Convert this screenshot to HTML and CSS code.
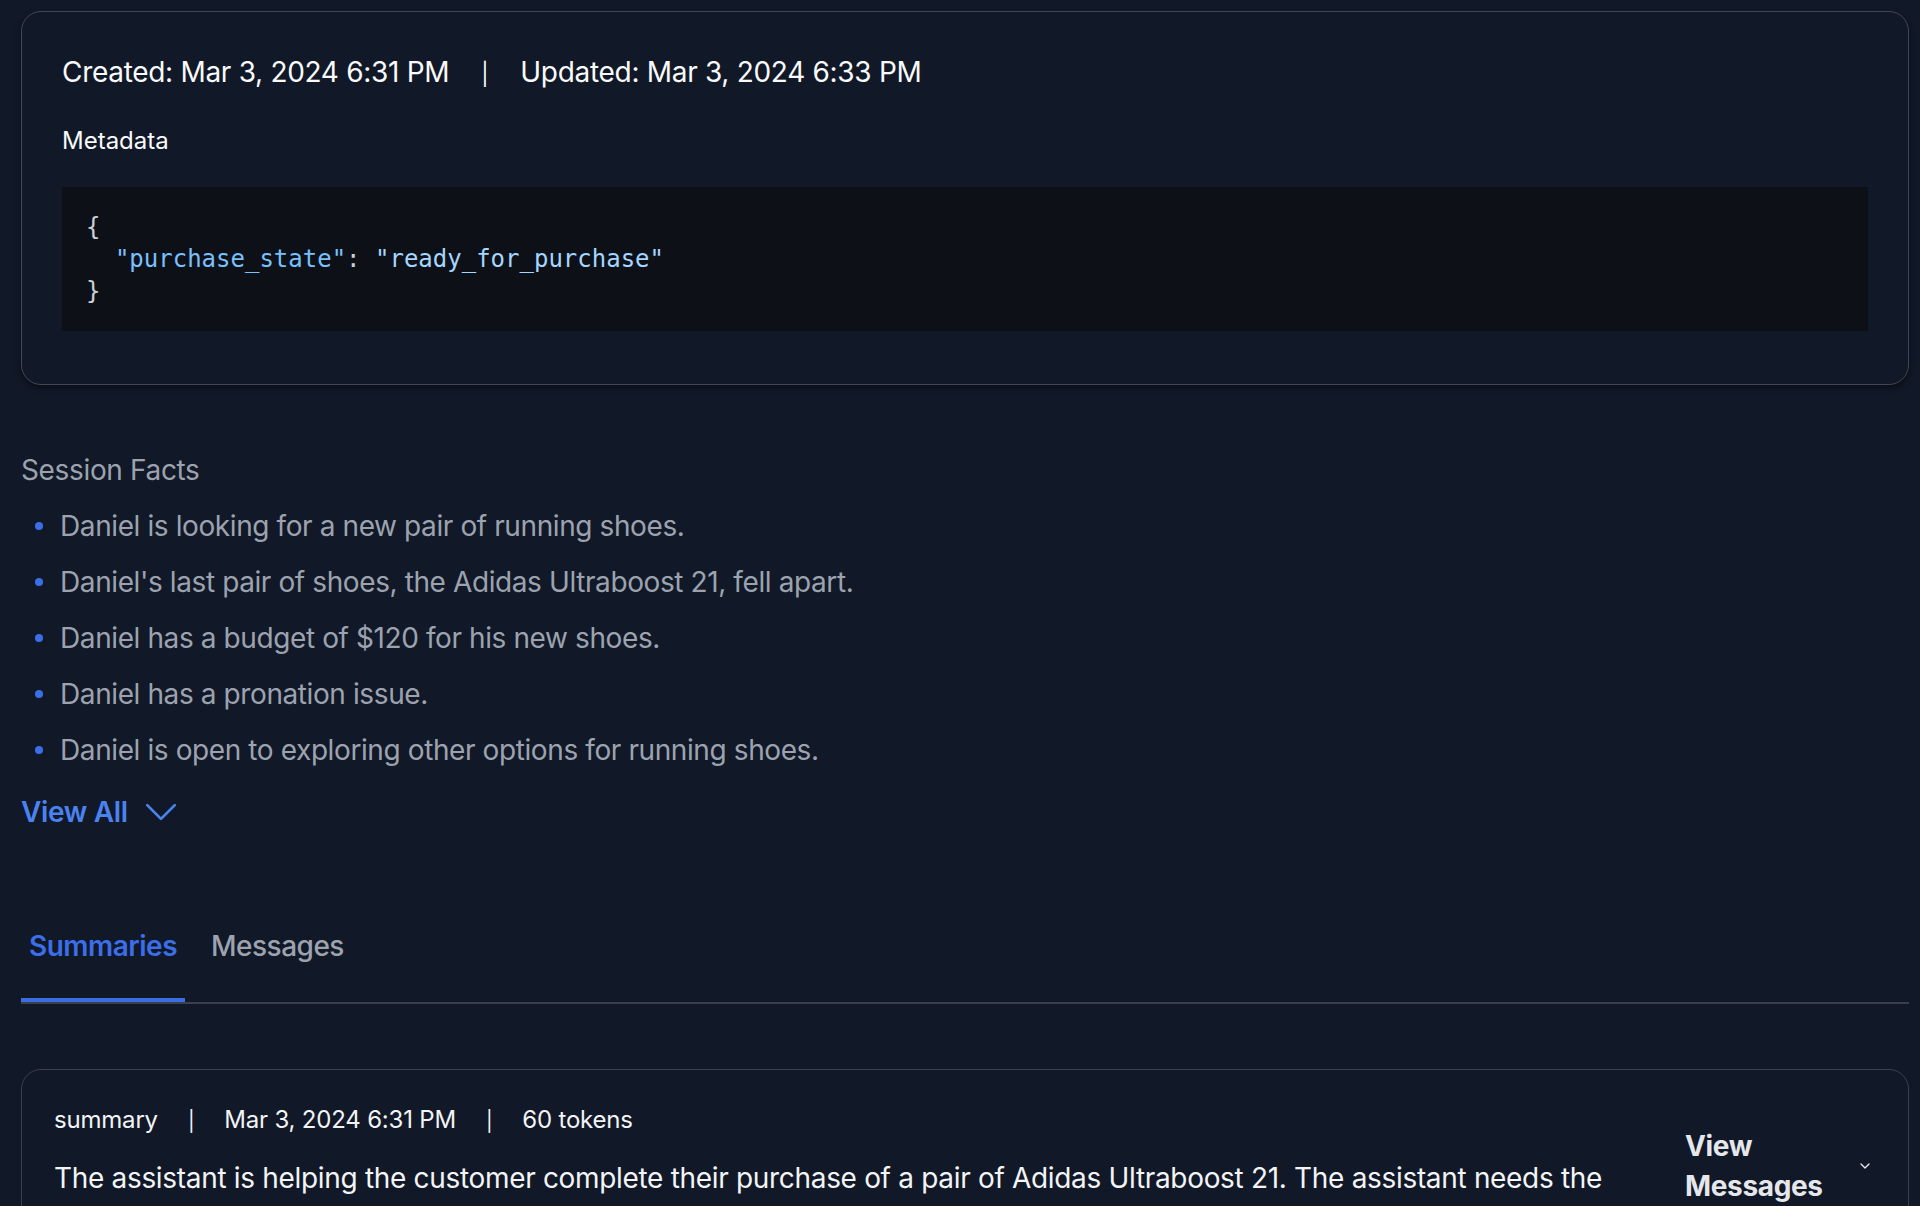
FILE: index.html
```html
<!DOCTYPE html>
<html lang="en">
<head>
<meta charset="utf-8">
<title>Session</title>
<link rel="stylesheet" href="styles.css">
</head>
<body>
<main class="page">
  <section class="card">
    <div class="timestamps">
      <span>Created: Mar 3, 2024 6:31 PM</span><span class="sep">|</span><span>Updated: Mar 3, 2024 6:33 PM</span>
    </div>
    <div class="meta-label">Metadata</div>
    <pre class="code"><span class="punc">{</span>
  <span class="key">"purchase_state"</span><span class="punc">: </span><span class="str">"ready_for_purchase"</span>
<span class="punc">}</span></pre>
  </section>

  <section class="facts-section">
    <h2 class="facts-title">Session Facts</h2>
    <ul class="facts">
      <li class="fact">Daniel is looking for a new pair of running shoes.</li>
      <li class="fact">Daniel's last pair of shoes, the Adidas Ultraboost 21, fell apart.</li>
      <li class="fact">Daniel has a budget of $120 for his new shoes.</li>
      <li class="fact">Daniel has a pronation issue.</li>
      <li class="fact">Daniel is open to exploring other options for running shoes.</li>
    </ul>
    <button class="view-all" type="button">
      <span>View All</span>
      <svg class="view-all-icon" viewBox="0 0 24 24" fill="none" stroke="currentColor" stroke-width="1.5" stroke-linecap="round" stroke-linejoin="round"><path d="M19.5 8.25l-7.5 7.5-7.5-7.5"/></svg>
    </button>
  </section>

  <nav class="tabs">
    <button class="tab tab-active" type="button">Summaries</button>
    <button class="tab" type="button">Messages</button>
  </nav>

  <section class="summary-card">
    <div class="summary-body">
      <div class="summary-meta">
        <span>summary</span><span class="meta-sep">|</span><span>Mar 3, 2024 6:31 PM</span><span class="meta-sep">|</span><span>60 tokens</span>
      </div>
      <p class="summary-text">The assistant is helping the customer complete their purchase of a pair of Adidas Ultraboost 21. The assistant needs the</p>
    </div>
    <button class="view-messages" type="button">
      <span class="vm-label">View Messages</span>
      <svg class="vm-icon" viewBox="0 0 24 24" fill="none" stroke="currentColor" stroke-width="2" stroke-linecap="round" stroke-linejoin="round"><path d="M6 9l6 6 6-6"/></svg>
    </button>
  </section>
</main>
</body>
</html>
```

FILE: styles.css
```css
* {
  box-sizing: border-box;
}

html,
body {
  margin: 0;
  background: #111827;
}

body {
  font-family: Inter, "Noto Sans", "Liberation Sans", sans-serif;
  color: #f3f4f6;
  overflow: hidden;
}

.page {
  padding: 11px 11px 0 21px;
}

.card {
  border: 1px solid #404757;
  border-radius: 20px;
  padding: 40px;
  background: #111827;
  box-shadow: 0 3px 6px rgba(0, 0, 0, 0.45);
}

.timestamps {
  font-size: 28px;
  line-height: 40px;
  font-weight: 400;
  letter-spacing: -0.3px;
  color: #f9fafb;
}

.sep {
  margin: 0 32px;
  font-size: 22px;
  line-height: 1;
}

.meta-label {
  margin-top: 33px;
  font-size: 24px;
  line-height: 32px;
  color: #f9fafb;
}

.code {
  margin: 30px 0 13px;
  padding: 24px 24px;
  background: #0d1117;
  font-family: "DejaVu Sans Mono", "Liberation Mono", monospace;
  font-size: 24px;
  line-height: 32px;
  color: #c9d1d9;
  white-space: pre;
}

.key {
  color: #79c0ff;
}

.str {
  color: #a5d6ff;
}

.punc {
  color: #c9d1d9;
}

.facts-section {
  margin-top: 65px;
}

.facts-title {
  margin: 0;
  font-size: 28px;
  line-height: 40px;
  font-weight: 400;
  letter-spacing: -0.35px;
  color: #9ca3af;
}

.facts {
  list-style: none;
  margin: 16px 0 0;
  padding: 0 0 0 14px;
  display: flex;
  flex-direction: column;
  gap: 16px;
}

.fact {
  display: flex;
  align-items: center;
  font-size: 28px;
  line-height: 40px;
  letter-spacing: -0.4px;
  color: #9ca3af;
}

.fact::before {
  content: "";
  flex: none;
  width: 8px;
  height: 8px;
  border-radius: 50%;
  background: #3b6ee8;
  margin-right: 17px;
}

.view-all {
  margin-top: 20px;
  display: inline-flex;
  align-items: center;
  gap: 11px;
  padding: 0;
  border: none;
  background: none;
  font-family: inherit;
  font-size: 28px;
  line-height: 40px;
  font-weight: 600;
  letter-spacing: -0.35px;
  color: #4a83f0;
}

.view-all-icon {
  width: 44px;
  height: 44px;
}

.tabs {
  margin-top: 68px;
  display: flex;
  gap: 18px;
  border-bottom: 2px solid #3a3f4e;
}

.tab {
  padding: 24px 8px 32px;
  border: none;
  border-bottom: 4px solid transparent;
  background: none;
  font-family: inherit;
  font-size: 28px;
  line-height: 40px;
  font-weight: 500;
  letter-spacing: -0.5px;
  color: #9ca3af;
}

.tab-active {
  border-bottom-color: #3b6ee0;
  color: #3b6ee8;
  font-weight: 600;
}

.summary-card {
  margin-top: 65px;
  border: 1px solid #3a3f4e;
  border-radius: 20px;
  padding: 34px 32px 32px;
  display: flex;
  align-items: flex-start;
  gap: 24px;
}

.summary-body {
  flex: 1;
  min-width: 0;
}

.summary-meta {
  font-size: 24px;
  line-height: 32px;
  letter-spacing: -0.2px;
  color: #f3f4f6;
}

.meta-sep {
  margin: 0 30px;
  font-size: 20px;
  line-height: 1;
}

.summary-text {
  margin: 18px 0 0;
  font-size: 28px;
  line-height: 48px;
  letter-spacing: -0.32px;
  color: #f3f4f6;
}

.view-messages {
  flex: none;
  width: 191px;
  margin-top: 22px;
  display: flex;
  align-items: center;
  justify-content: space-between;
  padding: 0;
  border: none;
  background: none;
  text-align: left;
  font-family: inherit;
  font-size: 28px;
  line-height: 40px;
  font-weight: 700;
  letter-spacing: -0.35px;
  color: #e5e7eb;
}

.vm-label {
  width: 140px;
}

.vm-icon {
  width: 16px;
  height: 16px;
  margin-right: 3px;
}
```
